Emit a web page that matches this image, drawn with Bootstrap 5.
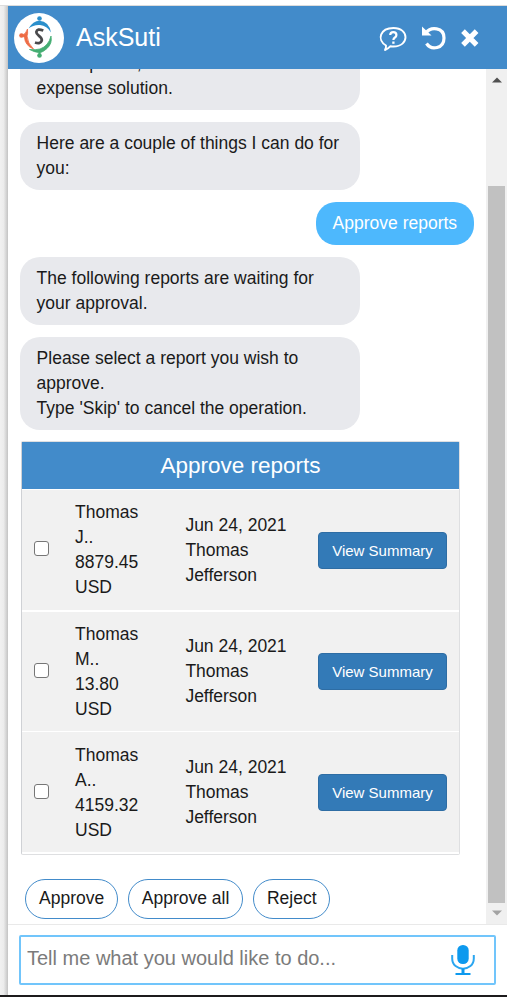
<!DOCTYPE html>
<html lang="en">
<head>
<meta charset="utf-8">
<meta name="viewport" content="width=device-width, initial-scale=1">
<title>AskSuti</title>
<link href="https://cdn.jsdelivr.net/npm/bootstrap@5.3.0/dist/css/bootstrap.min.css" rel="stylesheet">
<style>
body{font-family:"Liberation Sans",Arial,sans-serif;font-size:17.5px;line-height:25px;color:#1a1a1a;background:#fff;height:997px;padding-top:5px}
.stage{height:992px;border-top:1px solid #dcdcdc;border-bottom:2px solid #1d1b1c}
.edge{width:8px;background:linear-gradient(90deg,#f1f1f1 0,#ececec 45%,#c3c3c3 100%)}
.topbar{height:63px;background:#428bca;padding:0 27px 0 6px}
.logo{width:50px;height:50px;background:#fff}
.title{font-size:25px;line-height:30px;margin-left:12px;padding-bottom:2px}
.tools{gap:14.5px}
.feed{height:855px}
.talk{padding:0 12px 0 12px}
.scrolled{height:53px}
.bubble{width:340px;padding:9px 17px 9px 16.6px;border-radius:20px;background:#e8e9ed;margin-bottom:12px}
.two{height:68px}
.three{height:93px;margin-bottom:11px}
.mine{background:#4db8fd;color:#fff;height:43px;width:158px;white-space:nowrap}
.report{width:439px;height:414px;border:1px solid #dedfe1;border-left-color:#cfd1d5;margin-left:1px;background:#fff;border-radius:2px}
.report-title{height:47px;background:#428bca;color:#fff;font-size:22.5px}
.report-row{height:121px;background:#f1f1f1;background-clip:padding-box;border-top:1px solid #fff;padding-left:12px;padding-right:12px}
.report-row + .report-row{border-top-width:2px}
.report-row:last-child{border-top-width:1px;border-bottom:1px solid #fff;height:122px}
.report-row:last-child .who{padding-top:1px}
.tick{width:15px;height:15px;margin:0;border:1px solid #767676;border-radius:3px!important;background:#fff;margin-top:-2px}
.report-title + .report-row .tick{margin-top:-3px}
.who{width:84px;margin-left:26px}
.when{width:132.6px;margin-left:26.4px}
.btn.view{width:129px;height:37px;font-size:15px;line-height:21px;padding:7px 0 8px;border-radius:4px;background:#337ab7;border:1px solid #2e6da4;color:#fff}
.chips{gap:10px;margin:24px 0 0 5px}
.btn.chip{height:40px;border:1px solid #428bca;border-radius:20px;font-size:17.5px;line-height:25px;padding:6px 12.6px 7px 13px;color:#1a1a1a;background:#fff}
.track{width:21px;background:#f0f0f0;padding:8px 2px 8px 2px}
.thumb{height:717px;background:#c1c1c1;width:17px;margin-bottom:7px}
.composer{height:70px;border-top:1px solid #e9e9e9;padding:10px 11px 0}
.ask{height:50px;width:477px;border:2px solid #71c5fb;border-radius:2px;padding:0 19px 0 6px;font-size:20px}
.ask input{font-size:20px;line-height:24px;color:#333;padding:0 0 5px}
.ask input::placeholder{color:#7b7b7b;opacity:1}
</style>
<script src="https://cdn.jsdelivr.net/npm/bootstrap@5.3.0/dist/js/bootstrap.bundle.min.js"></script>
</head>
<body class="overflow-hidden">
<div class="stage d-flex">
  <div class="edge flex-shrink-0"></div>
  <main class="flex-grow-1 d-flex flex-column">
    <header class="topbar d-flex align-items-center text-white">
      <div class="logo rounded-circle flex-shrink-0">
        <svg class="d-block" width="50" height="50" viewBox="0 0 50 50" fill="none">
          <path d="M14.500 15.500Q19 8 25.500 7.800Q35 8.500 37 19.500Q33 12.500 26 12Q19.500 11.500 14.500 15.500Z" fill="#2b8fcb"/>
          <path d="M13.500 16Q14 21 13 23Q13.500 30.500 19.500 36Q11 32.500 10.500 24.500L8 22.500Q12 21 13.500 16Z" fill="#ee6c45" stroke="#ee6c45" stroke-width=".8"/>
          <path d="M37 23Q38.500 30.500 33 35.500Q29 39 26.500 39.500L25.500 42L24.500 39.500Q20 39 15.500 36.500Q22 37 26 36Q34.500 33 37 23Z" fill="#44ad72" stroke="#44ad72" stroke-width=".8"/>
          <circle cx="25.500" cy="5.500" r="2.300" fill="#2b8fcb"/>
          <circle cx="7.500" cy="22.500" r="2.300" fill="#ee6c45"/>
          <circle cx="25.500" cy="42.500" r="2.300" fill="#44ad72"/>
          <path d="M29.300 17.500Q23 15 22.300 19C22 22.500 28.500 23.500 27.800 27.500Q26.500 31.500 21 29.500" stroke="#4a4a4c" stroke-width="2.700"/>
        </svg>
      </div>
      <div class="title">AskSuti</div>
      <div class="tools ms-auto d-flex align-items-center">
        <svg width="28" height="28" viewBox="0 0 28 28" fill="none" stroke="#fff" stroke-width="1.900">
          <path d="M7 21.500C-2.500 16 1 4 14.500 4C30.500 4 30.500 22.500 14.500 22.500Q13 22.500 11.500 22.200Q9 25 6 26Q7.300 23.500 7 21.500Z" stroke-linejoin="round"/>
          <path d="M11.200 11Q11.300 8.200 14.300 8.200Q17.400 8.200 17.400 11Q17.400 12.500 15.900 13.500Q14.400 14.400 14.400 16" stroke-width="2.200"/><path d="M14.400 17.500v2.300" stroke-width="2.300"/>
        </svg>
        <svg width="24" height="26" viewBox="0 0 24 26" fill="none">
          <path d="M4 8C8.500 1.500 22 2 22 13C22 23.500 9.500 26 4.500 18.500" stroke="#fff" stroke-width="3.200"/>
          <path d="M0 1.500L9.500 10.500H0Z" fill="#fff"/>
        </svg>
        <svg width="20" height="20" viewBox="0 0 20 20"><path d="M3 3.200L16.600 16.800M16.600 3.200L3 16.800" stroke="#fff" stroke-width="5.200"/></svg>
      </div>
    </header>
    <section class="feed d-flex overflow-hidden">
      <div class="talk flex-grow-1 d-flex flex-column">
        <div class="scrolled d-flex flex-column justify-content-end overflow-hidden flex-shrink-0 mb-0">
          <div class="bubble flex-shrink-0">and expense,<br>expense solution.</div>
        </div>
        <div class="bubble two flex-shrink-0">Here are a couple of things I can do for you:</div>
        <div class="bubble mine align-self-end flex-shrink-0">Approve reports</div>
        <div class="bubble two flex-shrink-0">The following reports are waiting for your approval.</div>
        <div class="bubble three flex-shrink-0">Please select a report you wish to approve.<br>Type 'Skip' to cancel the operation.</div>
        <div class="report flex-shrink-0">
          <div class="report-title d-flex align-items-center justify-content-center">Approve reports</div>
          <div class="report-row d-flex align-items-center">
            <input type="checkbox" class="form-check-input tick">
            <div class="who">Thomas J..<br>8879.45 USD</div>
            <div class="when">Jun 24, 2021<br>Thomas<br>Jefferson</div>
            <button class="btn view">View Summary</button>
          </div>
          <div class="report-row d-flex align-items-center">
            <input type="checkbox" class="form-check-input tick">
            <div class="who">Thomas M..<br>13.80<br>USD</div>
            <div class="when">Jun 24, 2021<br>Thomas<br>Jefferson</div>
            <button class="btn view">View Summary</button>
          </div>
          <div class="report-row d-flex align-items-center">
            <input type="checkbox" class="form-check-input tick">
            <div class="who">Thomas A..<br>4159.32 USD</div>
            <div class="when">Jun 24, 2021<br>Thomas<br>Jefferson</div>
            <button class="btn view">View Summary</button>
          </div>
        </div>
        <div class="chips d-flex">
          <button class="btn chip">Approve</button>
          <button class="btn chip">Approve all</button>
          <button class="btn chip">Reject</button>
        </div>
      </div>
      <div class="track d-flex flex-column align-items-center flex-shrink-0">
        <svg width="10" height="6" viewBox="0 0 10 6"><path d="M0 5.500L5 0.500L10 5.500Z" fill="#505050"/></svg>
        <div class="thumb mt-auto flex-shrink-0"></div>
        <svg width="10" height="6" viewBox="0 0 10 6"><path d="M0 .5L5 5.500L10 .5Z" fill="#a3a3a3"/></svg>
      </div>
    </section>
    <footer class="composer">
      <div class="ask d-flex align-items-center">
        <input class="form-control border-0 shadow-none bg-transparent" placeholder="Tell me what you would like to do...">
        <svg class="flex-shrink-0" width="24" height="32" viewBox="0 0 24 32" fill="none">
          <rect x="6.300" y="1" width="11.400" height="19" rx="5.500" fill="#0d99ee"/>
          <path d="M1.200 11v3.500C1.200 28 22.800 28 22.800 14.500V11" stroke="#2ba6f0" stroke-width="2"/>
          <path d="M12 24.500v5" stroke="#0d99ee" stroke-width="3"/>
          <path d="M4.500 30h15" stroke="#0d99ee" stroke-width="2"/>
        </svg>
      </div>
    </footer>
  </main>
</div>
</body>
</html>
